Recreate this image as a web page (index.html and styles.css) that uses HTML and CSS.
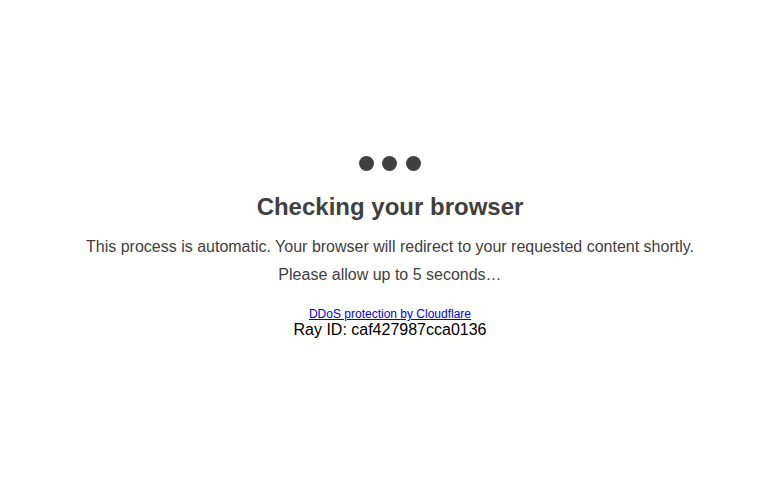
FILE: index.html
```html
<!DOCTYPE html>
<html>
<head>
<meta charset="utf-8">
<title>Just a moment...</title>
<link rel="stylesheet" href="styles.css">
</head>
<body>
<main class="page">
  <div class="content">
    <div class="bubbles">
      <span class="bubble"></span><span class="bubble"></span><span class="bubble"></span>
    </div>
    <h1 class="title">Checking your browser</h1>
    <p class="message">This process is automatic. Your browser will redirect to your requested content shortly.<br>Please allow up to 5 seconds…</p>
    <div class="footer">
      <a class="cf-link" href="#">DDoS protection by Cloudflare</a>
      <div class="ray">Ray ID: caf427987cca0136</div>
    </div>
  </div>
</main>
</body>
</html>
```

FILE: styles.css
```css
html, body {
  margin: 0;
  padding: 0;
  width: 100%;
  height: 100%;
  background: #fff;
}
body {
  font-family: "Liberation Sans", Arial, Helvetica, sans-serif;
  color: #404040;
}
.page {
  box-sizing: border-box;
  height: 100%;
  padding-top: 2px;
  display: flex;
  align-items: center;
  justify-content: center;
}
.content {
  display: flex;
  flex-direction: column;
  align-items: center;
  text-align: center;
}
.bubbles {
  display: flex;
  gap: 8.5px;
  height: 15px;
}
.bubble {
  width: 15px;
  height: 15px;
  border-radius: 50%;
  background: #404040;
}
.title {
  margin: 22px 0 0;
  font-size: 24px;
  font-weight: 700;
  line-height: 28px;
}
.message {
  margin: 12px 0 0;
  font-size: 16px;
  line-height: 28px;
}
.footer {
  margin-top: 18px;
  display: flex;
  flex-direction: column;
  align-items: center;
}
.cf-link {
  font-size: 12px;
  line-height: 14px;
  color: #0000ee;
}
.ray {
  font-size: 16px;
  line-height: 18px;
  color: #000;
}
```
